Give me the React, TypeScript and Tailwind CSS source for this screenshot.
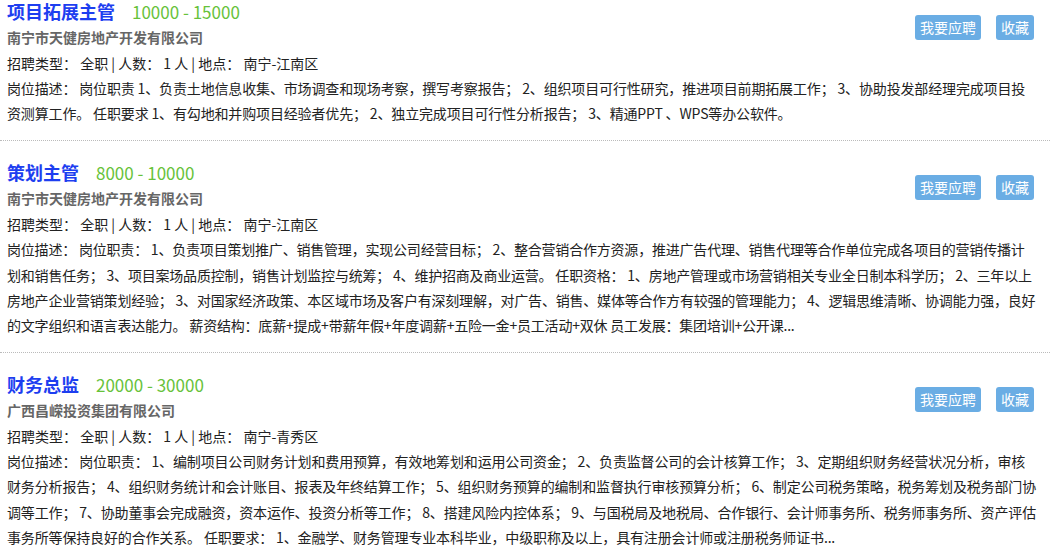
import React from "react";

type Job = {
  title: string;
  salary: string;
  company: string;
  location: string;
  desc: string;
  tight: boolean;
};

const jobs: Job[] = [
  {
    title: "项目拓展主管",
    salary: "10000 - 15000",
    company: "南宁市天健房地产开发有限公司",
    location: "南宁-江南区",
    tight: false,
    desc: "岗位描述： 岗位职责 1、负责土地信息收集、市场调查和现场考察，撰写考察报告； 2、组织项目可行性研究，推进项目前期拓展工作； 3、协助投发部经理完成项目投资测算工作。 任职要求 1、有勾地和并购项目经验者优先； 2、独立完成项目可行性分析报告； 3、精通PPT 、WPS等办公软件。",
  },
  {
    title: "策划主管",
    salary: "8000 - 10000",
    company: "南宁市天健房地产开发有限公司",
    location: "南宁-江南区",
    tight: true,
    desc: "岗位描述： 岗位职责： 1、负责项目策划推广、销售管理，实现公司经营目标； 2、整合营销合作方资源，推进广告代理、销售代理等合作单位完成各项目的营销传播计划和销售任务； 3、项目案场品质控制，销售计划监控与统筹； 4、维护招商及商业运营。 任职资格： 1、房地产管理或市场营销相关专业全日制本科学历； 2、三年以上房地产企业营销策划经验； 3、对国家经济政策、本区域市场及客户有深刻理解，对广告、销售、媒体等合作方有较强的管理能力； 4、逻辑思维清晰、协调能力强，良好的文字组织和语言表达能力。 薪资结构：底薪+提成+带薪年假+年度调薪+五险一金+员工活动+双休 员工发展：集团培训+公开课...",
  },
  {
    title: "财务总监",
    salary: "20000 - 30000",
    company: "广西昌嵘投资集团有限公司",
    location: "南宁-青秀区",
    tight: false,
    desc: "岗位描述： 岗位职责： 1、编制项目公司财务计划和费用预算，有效地筹划和运用公司资金； 2、负责监督公司的会计核算工作； 3、定期组织财务经营状况分析，审核财务分析报告； 4、组织财务统计和会计账目、报表及年终结算工作； 5、组织财务预算的编制和监督执行审核预算分析； 6、制定公司税务策略，税务筹划及税务部门协调等工作； 7、协助董事会完成融资，资本运作、投资分析等工作； 8、搭建风险内控体系； 9、与国税局及地税局、合作银行、会计师事务所、税务师事务所、资产评估事务所等保持良好的合作关系。 任职要求： 1、金融学、财务管理专业本科毕业，中级职称及以上，具有注册会计师或注册税务师证书...",
  },
];

function JobItem({ job, first }: { job: Job; first: boolean }) {
  return (
    <div
      className={`${first ? "pt-0" : "pt-[18px]"} pb-[14px] pl-[7px] pr-[12px] border-b border-dotted border-[#bbbbbb] flow-root`}
    >
      <div className={`float-right ${first ? "mt-[15px]" : "mt-[16px]"} mr-[4px] flex gap-[15px]`}>
        <button className="h-[25px] px-[5px] rounded-[3px] bg-[#6aade4] text-white text-[14px] leading-[25px]">
          我要应聘
        </button>
        <button className="h-[25px] px-[5px] rounded-[3px] bg-[#6aade4] text-white text-[14px] leading-[25px]">
          收藏
        </button>
      </div>
      <div
        className={`${first ? "h-[24px] leading-[22px]" : "h-[26px] leading-[26px]"} whitespace-nowrap`}
      >
        <span className="text-[18px] font-bold text-[#1d3ef0]">{job.title}</span>
        <span className="ml-[17px] text-[17px] text-[#67c23a]">{job.salary}</span>
      </div>
      <div className="h-[26px] leading-[26px] text-[14px] font-bold text-[#666666]">
        {job.company}
      </div>
      <div className="h-[26px] leading-[26px] text-[14px] text-[#222222]">
        招聘类型： 全职 | 人数： 1 人 | 地点： {job.location}
      </div>
      <div
        className={`leading-[25.2px] text-[14px] ${job.tight ? "tracking-[-0.2px]" : "tracking-[-0.15px]"} text-[#222222]`}
      >
        {job.desc}
      </div>
    </div>
  );
}

export default function App() {
  return (
    <div className="w-[1050px] h-[557px] overflow-hidden bg-white font-['Microsoft_YaHei','Noto_Sans_CJK_SC',sans-serif]">
      {jobs.map((j, i) => (
        <JobItem key={i} job={j} first={i === 0} />
      ))}
    </div>
  );
}
